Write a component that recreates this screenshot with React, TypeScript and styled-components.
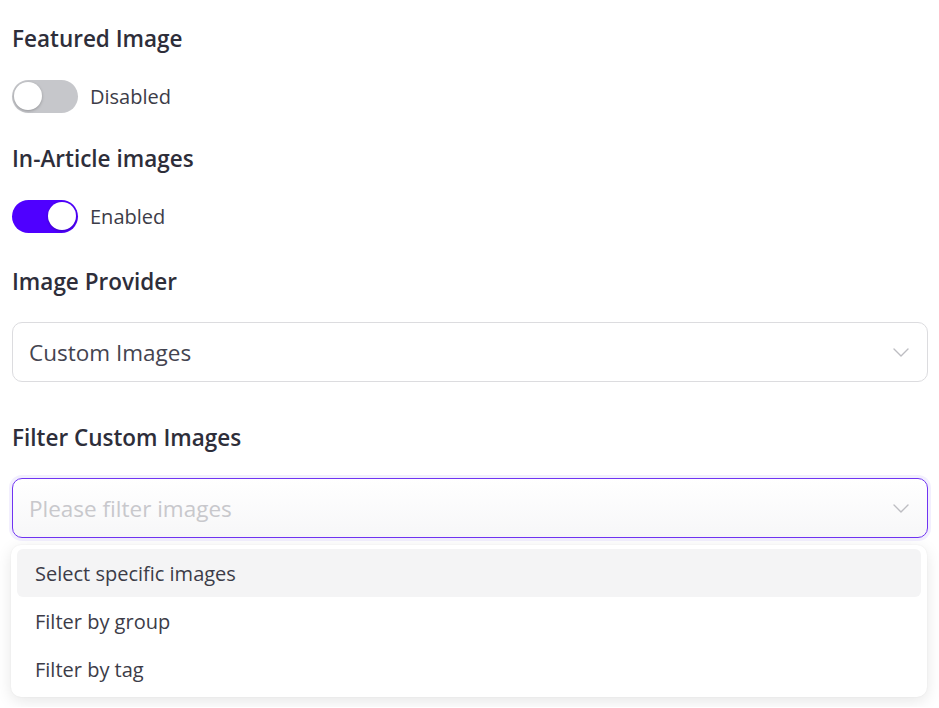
import styled, { createGlobalStyle } from "styled-components";

const GlobalStyle = createGlobalStyle`
    body {
        margin: 0;
        background: #ffffff;
        font-family: "Segoe UI", "Open Sans", "Noto Sans", sans-serif;
        color: #333340;
    }
`;

function Chevron() {
    return (
        <svg width="16" height="9" viewBox="0 0 16 9" fill="none">
            <path d="M1 1l7 7 7-7" stroke="#bdbdc2" strokeWidth="1.4" strokeLinecap="round" strokeLinejoin="round" />
        </svg>
    );
}

function Toggle({ on, label }: { on: boolean; label: string }) {
    return (
        <ToggleRow>
            <Track $on={on}>
                <Knob $on={on} />
            </Track>
            <ToggleLabel>{label}</ToggleLabel>
        </ToggleRow>
    );
}

const options = ["Select specific images", "Filter by group", "Filter by tag"];

function App() {
    return <>
        <GlobalStyle />
        <Page>
            <Section $after={33}>
                <Heading $gap={27}>Featured Image</Heading>
                <Toggle on={false} label="Disabled" />
            </Section>
            <Section $after={36}>
                <Heading $gap={27}>In-Article images</Heading>
                <Toggle on={true} label="Enabled" />
            </Section>
            <Section $after={42}>
                <Heading $gap={26}>Image Provider</Heading>
                <Select>
                    <SelectValue>Custom Images</SelectValue>
                    <Chevron />
                </Select>
            </Section>
            <Section $after={0}>
                <Heading $gap={26}>Filter Custom Images</Heading>
                <Select $focused>
                    <SelectValue $placeholder>Please filter images</SelectValue>
                    <Chevron />
                </Select>
                <Menu>
                    {options.map((option, i) => (
                        <MenuItem key={option} $active={i === 0}>{option}</MenuItem>
                    ))}
                </Menu>
            </Section>
        </Page>
    </>
}

export default App;

const Page = styled.div`
    padding: 25px 11px 10px 12px;
`;

const Section = styled.div<{ $after: number }>`
    display: flex;
    flex-direction: column;
    margin-bottom: ${p => p.$after}px;
`;

const Heading = styled.h3<{ $gap: number }>`
    margin: 0 0 ${p => p.$gap}px;
    font-size: 22.5px;
    line-height: 28px;
    font-weight: 600;
    color: #2e2e3a;
`;

const ToggleRow = styled.div`
    display: flex;
    align-items: center;
    gap: 12px;
    height: 32px;
`;

const Track = styled.div<{ $on: boolean }>`
    width: 66px;
    height: 33px;
    border-radius: 17px;
    background: ${p => (p.$on ? "#4f00ff" : "#c6c7cb")};
    display: flex;
    align-items: center;
    justify-content: ${p => (p.$on ? "flex-end" : "flex-start")};
    padding: 0 2px;
    box-sizing: border-box;
`;

const Knob = styled.div<{ $on: boolean }>`
    width: 28px;
    height: 28px;
    border-radius: 50%;
    background: #ffffff;
    box-shadow: 0 1px 3px rgba(0, 0, 0, 0.25);
`;

const ToggleLabel = styled.span`
    font-size: 20px;
    color: #3c3c48;
`;

const Select = styled.div<{ $focused?: boolean }>`
    height: 60px;
    box-sizing: border-box;
    display: flex;
    align-items: center;
    justify-content: space-between;
    padding: 0 18px 0 16px;
    border-radius: 10px;
    border: 1px solid ${p => (p.$focused ? "#7034f2" : "#dcdcdf")};
    background: ${p => (p.$focused ? "linear-gradient(#ffffff, #f7f7f8)" : "#ffffff")};
    box-shadow: ${p => (p.$focused ? "0 0 0 3px rgba(110, 80, 240, 0.09)" : "none")};
`;

const SelectValue = styled.span<{ $placeholder?: boolean }>`
    font-size: 22.5px;
    color: ${p => (p.$placeholder ? "#c8c8cc" : "#444450")};
`;

const Menu = styled.div`
    margin: 7px 1px 0 -1px;
    padding: 4px 6px;
    border-radius: 10px;
    background: #ffffff;
    box-shadow: 0 4px 16px rgba(0, 0, 0, 0.1), 0 0 2px rgba(0, 0, 0, 0.06);
`;

const MenuItem = styled.div<{ $active?: boolean }>`
    height: 48px;
    display: flex;
    align-items: center;
    padding: 0 18px;
    border-radius: 6px;
    font-size: 20px;
    color: #3c3c48;
    background: ${p => (p.$active ? "#f4f4f5" : "transparent")};
`;
